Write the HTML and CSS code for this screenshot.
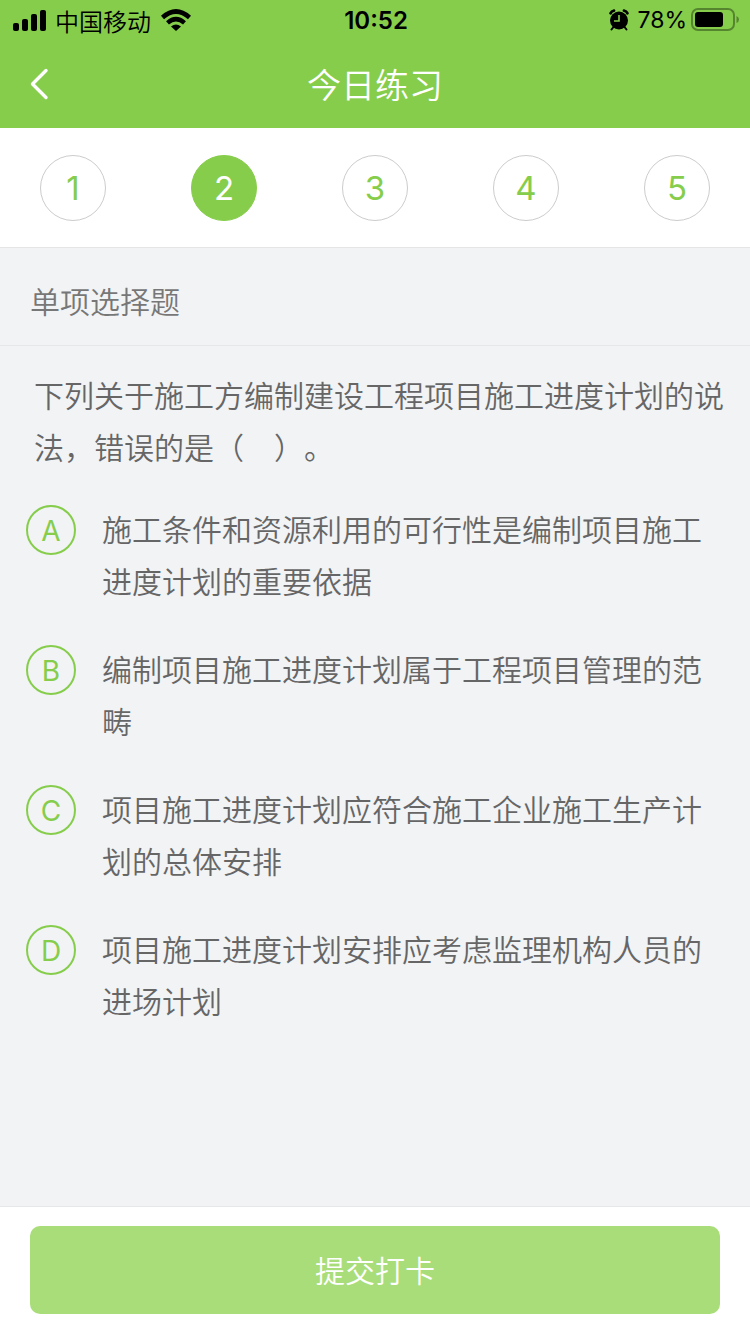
FILE: index.html
```html
<!DOCTYPE html>
<html lang="zh-CN">
<head>
    <meta charset="UTF-8">
    <meta name="viewport" content="width=device-width, initial-scale=1.0">
    <title>今日练习</title>
    <link rel="stylesheet" href="styles.css">
</head>
<body>
    <header class="header">
        <div class="status-bar">
            <div class="status-left">
                <svg class="signal" width="34" height="22" viewBox="0 0 34 22" aria-hidden="true">
                    <rect x="0" y="14" width="6" height="8" rx="2"/>
                    <rect x="9" y="10" width="6" height="12" rx="2"/>
                    <rect x="18" y="5" width="6" height="17" rx="2"/>
                    <rect x="27" y="1" width="6" height="21" rx="2"/>
                </svg>
                <span>中国移动</span>
                <svg class="wifi" width="30" height="22" viewBox="0 0 30 22" aria-hidden="true">
                    <path d="M1.500 8.500Q15 -3.500 28.500 8.500" fill="none" stroke="#000" stroke-width="4.600"/>
                    <path d="M6.500 13.800Q15 6.400 23.500 13.800" fill="none" stroke="#000" stroke-width="4.400"/>
                    <path d="M10 17.500Q15 13.600 20 17.500L15 22Z"/>
                </svg>
            </div>
            <span class="clock">10:52</span>
            <div class="status-right">
                <svg width="20" height="22" viewBox="0 0 20 22" aria-hidden="true">
                    <circle cx="10" cy="11.500" r="9"/>
                    <path d="M1.600 4.200Q2.500 2 5 1.600M18.400 4.200Q17.500 2 15 1.600" fill="none" stroke="#000" stroke-width="2.800" stroke-linecap="round"/>
                    <path d="M4.500 18L2.500 20.500M15.500 18L17.500 20.500" stroke="#000" stroke-width="2" stroke-linecap="round"/>
                    <path d="M10 6V12H5" fill="none" stroke="#86cd4b" stroke-width="1.600"/>
                </svg>
                <span class="percent">78%</span>
                <svg class="battery" width="48" height="24" viewBox="0 0 48 24" aria-hidden="true">
                    <rect x="1" y="1" width="42" height="21" rx="6" fill="none" stroke="#55852e" stroke-width="2"/>
                    <rect x="4" y="4" width="28" height="15" rx="3"/>
                    <path d="M45.500 8Q48 9 48 11.500T45.500 15Z" fill="#55852e"/>
                </svg>
            </div>
        </div>
        <nav class="title-bar">
            <button type="button" class="back" aria-label="返回">
                <svg width="20" height="32" viewBox="0 0 20 32" aria-hidden="true">
                    <path d="M16 2.500L2.500 16L16 29.500" fill="none" stroke="#fff" stroke-width="3.400" stroke-linecap="round" stroke-linejoin="round"/>
                </svg>
            </button>
            <h1>今日练习</h1>
        </nav>
    </header>

    <div class="steps">
        <button type="button" class="step">1</button>
        <button type="button" class="step active">2</button>
        <button type="button" class="step">3</button>
        <button type="button" class="step">4</button>
        <button type="button" class="step">5</button>
    </div>

    <h2 class="section-title">单项选择题</h2>

    <form class="quiz">
        <fieldset class="question">
            <legend>下列关于施工方编制建设工程项目施工进度计划的说法，错误的是（　）。</legend>
            <label class="option">
                <input type="radio" name="answer" value="A">
                <span class="letter">A</span>
                <span class="option-text">施工条件和资源利用的可行性是编制项目施工进度计划的重要依据</span>
            </label>
            <label class="option">
                <input type="radio" name="answer" value="B">
                <span class="letter">B</span>
                <span class="option-text">编制项目施工进度计划属于工程项目管理的范畴</span>
            </label>
            <label class="option">
                <input type="radio" name="answer" value="C">
                <span class="letter">C</span>
                <span class="option-text">项目施工进度计划应符合施工企业施工生产计划的总体安排</span>
            </label>
            <label class="option">
                <input type="radio" name="answer" value="D">
                <span class="letter">D</span>
                <span class="option-text">项目施工进度计划安排应考虑监理机构人员的进场计划</span>
            </label>
        </fieldset>
        <div class="footer">
            <button type="submit" class="submit">提交打卡</button>
        </div>
    </form>
</body>
</html>
```
FILE: styles.css
```css
* {
    box-sizing: border-box;
}
body {
    display: flex;
    flex-direction: column;
    min-height: 100vh;
    margin: 0;
    background-color: #f2f3f5;
    color: #666;
    font-family: "Noto Sans CJK SC", sans-serif;
    font-size: 30px;
    font-weight: 350;
    text-spacing-trim: space-all;
}
button {
    padding: 0;
    border: none;
    background: none;
    font: inherit;
    cursor: pointer;
}
svg {
    display: block;
}

/* Header */
.header {
    background-color: #86cd4b;
}
.status-bar {
    display: grid;
    grid-template-columns: 1fr auto 1fr;
    align-items: center;
    height: 40px;
    padding: 0 11px 0 13px;
    color: #000;
    font-size: 24px;
}
.status-left, .status-right {
    display: flex;
    align-items: center;
    gap: 8px;
}
.status-right {
    justify-content: flex-end;
}
.wifi {
    margin-left: 2px;
}
.clock, .percent {
    font-family: Inter, sans-serif;
}
.clock {
    font-weight: 600;
}
.percent {
    font-size: 23px;
    font-weight: 400;
}
.battery {
    margin-left: -4px;
}
.title-bar {
    display: grid;
    grid-template-columns: 60px 1fr 60px;
    align-items: center;
    height: 88px;
    color: #fff;
}
.back {
    display: flex;
    align-items: center;
    height: 88px;
    padding-left: 30px;
}
h1 {
    margin: 0;
    padding-bottom: 2px;
    font-size: 34px;
    font-weight: 350;
    text-align: center;
}

/* Question numbers */
.steps {
    display: flex;
    justify-content: space-between;
    padding: 27px 40px 26px;
    border-bottom: 1px solid #e5e5e5;
    background-color: #fff;
}
.step {
    width: 66px;
    height: 66px;
    border: 1px solid #ccc;
    border-radius: 50%;
    color: #86cd4b;
    font-family: Inter, sans-serif;
    font-size: 33px;
    font-weight: 400;
}
.step.active {
    border-color: #86cd4b;
    background-color: #86cd4b;
    color: #fff;
}

.section-title {
    margin: 0;
    padding: 30px 30px 23px;
    border-bottom: 1px solid #e6e7e9;
    color: #777;
    font-size: 30px;
    font-weight: 350;
    line-height: 44px;
}

/* Question and answers */
.quiz {
    display: flex;
    flex: 1;
    flex-direction: column;
    justify-content: space-between;
    line-height: 52px;
}
.question {
    display: flex;
    flex-direction: column;
    gap: 36px;
    min-width: 0;
    margin: 0;
    padding: 30px 26px;
    border: none;
}
legend {
    margin: 0 -26px;
    padding: 22px 25px 0 34px;
}
.option {
    display: flex;
    gap: 26px;
    cursor: pointer;
}
.option input {
    position: absolute;
    opacity: 0;
}
.letter {
    flex: none;
    width: 50px;
    height: 50px;
    margin-top: 3px;
    border: 2px solid #86cd4b;
    border-radius: 50%;
    color: #86cd4b;
    font-family: Inter, sans-serif;
    font-size: 28px;
    font-weight: 400;
    line-height: 48px;
    text-align: center;
}
.option input:checked + .letter {
    background-color: #86cd4b;
    color: #fff;
}

.footer {
    padding: 19px 30px 20px;
    border-top: 1px solid #e6e7e9;
    background-color: #fff;
}
.submit {
    display: block;
    width: 100%;
    height: 88px;
    padding-bottom: 2px;
    border-radius: 10px;
    background-color: #a9dd79;
    color: #fff;
}
```
